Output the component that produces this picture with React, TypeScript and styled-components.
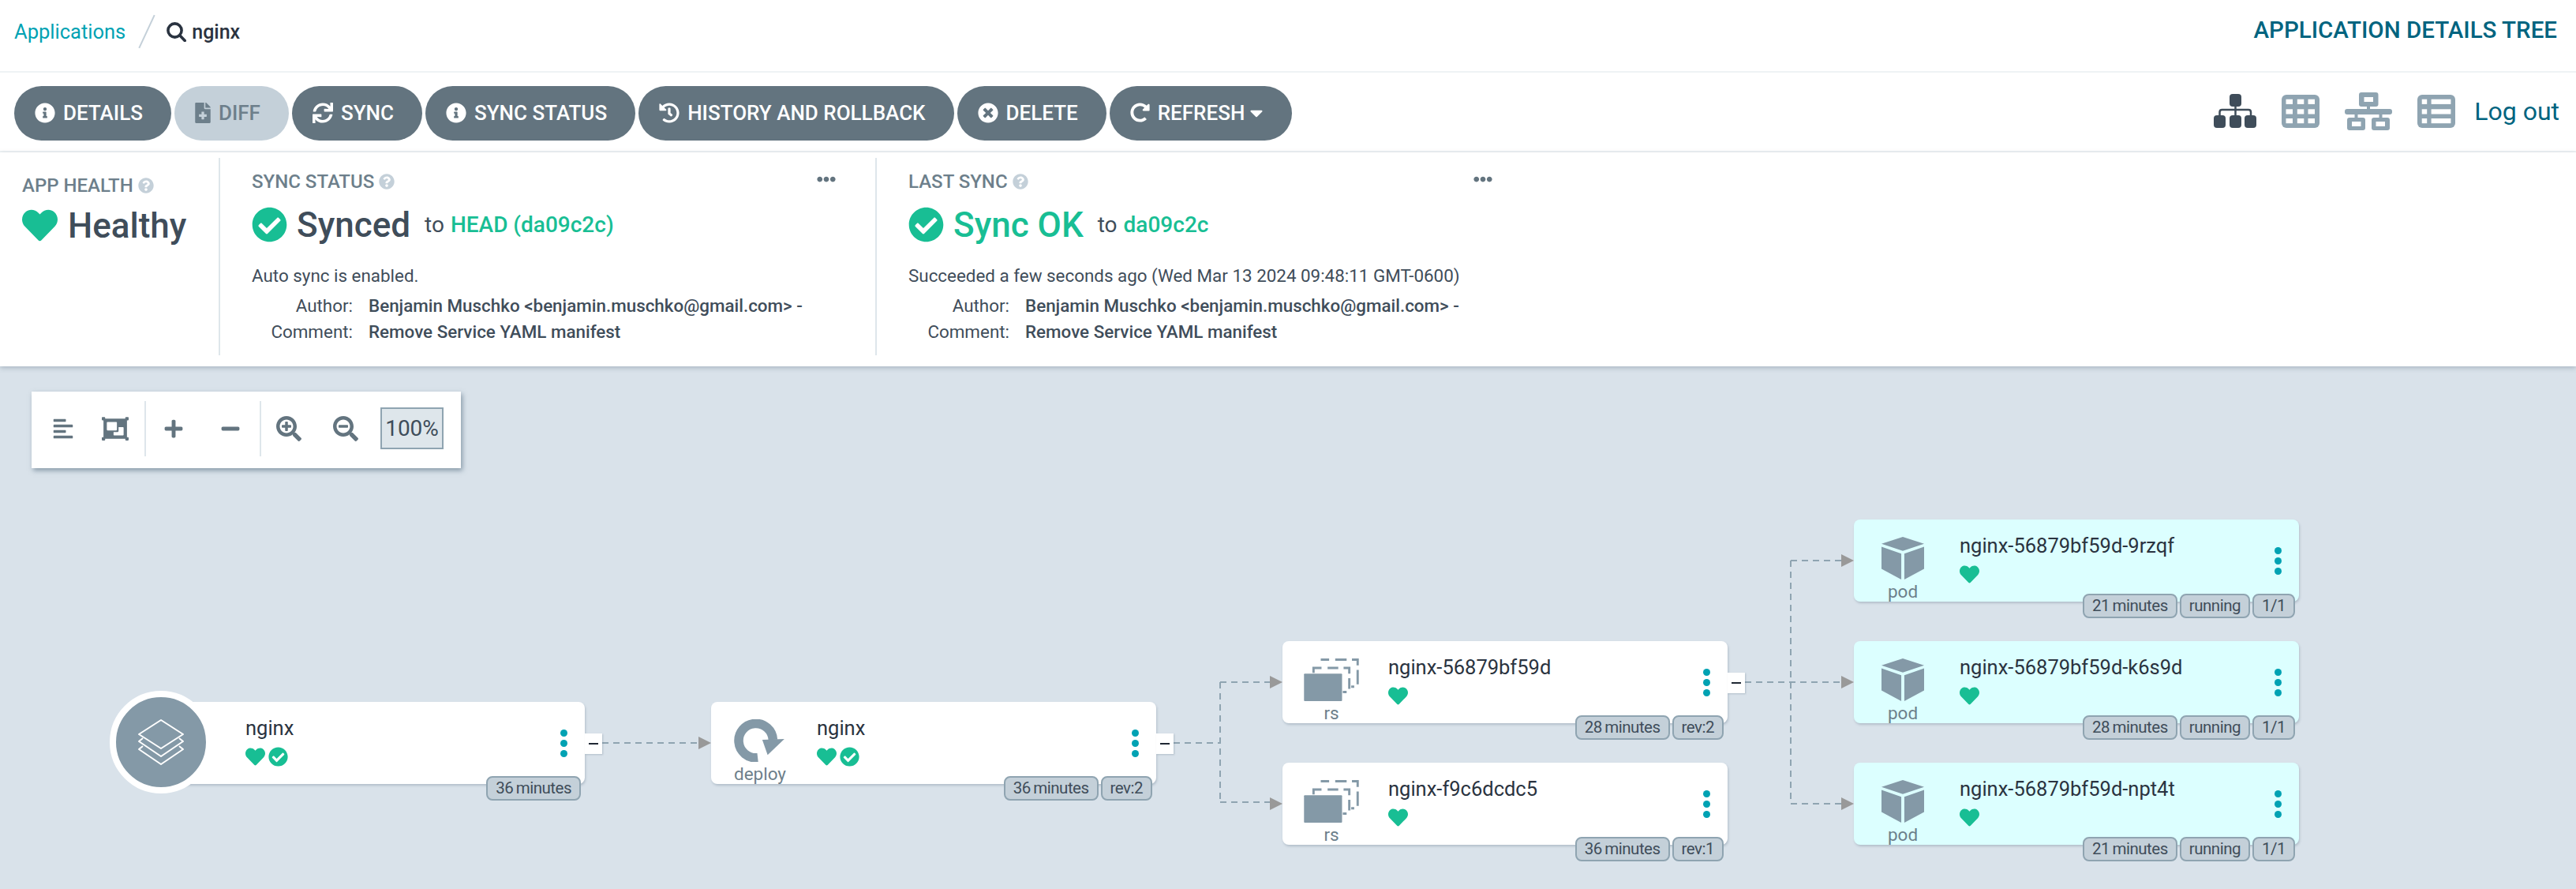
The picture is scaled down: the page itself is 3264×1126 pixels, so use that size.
import React from 'react';
import styled, { createGlobalStyle } from 'styled-components';
import {
  FaInfoCircle, FaFileMedical, FaSync, FaHistory, FaTimesCircle, FaRedoAlt, FaCaretDown,
  FaHeart, FaCheckCircle, FaQuestionCircle,
  FaEllipsisH, FaAlignLeft, FaObjectGroup, FaPlus, FaMinus, FaSearchPlus, FaSearchMinus,
} from 'react-icons/fa';

const GREEN = '#18be94';
const SLATE = '#63747f';
const INK = '#3f4d5a';
const TEAL = '#00647f';
const MUTED = '#8fa4b1';

const Global = createGlobalStyle`
  html, body { margin: 0; padding: 0; height: 100%; overflow: hidden; background: #fff; }
  body { font-family: Roboto, "Liberation Sans", sans-serif; color: ${INK}; }
  * { box-sizing: border-box; }
`;

const Page = styled.div`
  width: 3264px;
  height: 1126px;
  display: flex;
  flex-direction: column;
  overflow: hidden;
`;

const TopBar = styled.header`
  height: 92px;
  flex: none;
  border-bottom: 2px solid #eff3f5;
  display: flex;
  align-items: flex-start;
  justify-content: space-between;
  padding: 23px 24px 0 18px;
`;

const Crumbs = styled.nav`
  display: flex;
  align-items: center;
  height: 34px;
  font-size: 26px;
`;

const CrumbLink = styled.a`
  color: #00a2b3;
  font-weight: 400;
  font-size: 25.5px;
`;

const Slash = styled.span`
  width: 2px;
  height: 46px;
  background: #c4d0d9;
  transform: rotate(25deg);
  margin: 0 24px 0 26px;
`;

const SearchSvg = styled.svg`
  margin-right: 7px;
`;

const CrumbCurrent = styled.span`
  color: #2a3340;
  font-weight: 500;
  font-size: 25px;
`;

const PageTitle = styled.h1`
  margin: -1px 0 0;
  font-size: 29.5px;
  line-height: 32px;
  font-weight: 500;
  color: ${TEAL};
`;

const ToolBar = styled.div`
  height: 101px;
  flex: none;
  border-bottom: 2px solid #eff3f5;
  display: flex;
  align-items: flex-start;
  justify-content: space-between;
  padding: 17px 21px 0 18px;
`;

const ButtonRow = styled.div`
  display: flex;
  gap: 4px;
`;

const ActionButton = styled.button<{ $off?: boolean }>`
  height: 69px;
  border: 0;
  border-radius: 35px;
  padding: 0 36px 2px 26px;
  display: flex;
  align-items: center;
  gap: 10px;
  font: 500 26px Roboto, sans-serif;
  text-transform: uppercase;
  background: ${p => (p.$off ? '#c4d0d9' : '#63747f')};
  color: ${p => (p.$off ? '#6d7f8b' : '#fff')};
`;

const Caret = styled(FaCaretDown)`
  margin: 0 -4px 0 -8px;
`;

const DiffGlyph = styled(FaFileMedical)`
  width: 20px;
  height: 26px;
`;

const ViewRow = styled.div`
  display: flex;
  align-items: center;
  height: 69px;
  margin-top: -3px;
`;

const ViewIcon = styled.svg<{ $gap: number }>`
  display: block;
  margin-right: ${p => p.$gap}px;
`;

const LogOut = styled.a`
  font-size: 32px;
  color: ${TEAL};
`;

const SearchIcon = () => (
  <SearchSvg width="25" height="25" viewBox="0 0 25 25" fill="none" stroke="#2a3340" strokeLinecap="round">
    <circle cx="10.5" cy="10.5" r="8.6" strokeWidth="3.6" />
    <path d="M17 17 23.2 23.4" strokeWidth="3.6" />
  </SearchSvg>
);

const TreeIcon = () => (
  <ViewIcon $gap={32} width="54" height="43" viewBox="0 0 54 43" fill="#3f4d5a">
    <rect x="20" width="15" height="16" rx="4" />
    <rect y="27" width="15" height="16" rx="4" />
    <rect x="20" y="27" width="15" height="16" rx="4" />
    <rect x="39" y="27" width="15" height="16" rx="4" />
    <path d="M7.5 28V23Q7.5 20 10.5 20H44Q47 20 47 23V28M27.5 15V28" fill="none" stroke="#3f4d5a" strokeWidth="2.5" />
  </ViewIcon>
);

const GridIcon = () => (
  <ViewIcon $gap={32} width="48" height="42" viewBox="0 0 48 42">
    <rect width="48" height="42" rx="6" fill={MUTED} />
    {[5.7, 18.3, 30].flatMap(y =>
      [5.5, 19.8, 33.5].map(x => <rect key={`${x}-${y}`} x={x} y={y} width="8.5" height="6.2" fill="#fff" />),
    )}
  </ViewIcon>
);

const NetworkIcon = () => (
  <ViewIcon $gap={32} width="60" height="48" viewBox="0 0 60 48" fill={MUTED}>
    <path fillRule="evenodd" d="M21 0H39.5Q42.5 0 42.5 3V15Q42.5 18 39.5 18H21Q18 18 18 15V3Q18 0 21 0ZM24.5 6V12H36V6Z" />
    <rect y="21" width="60" height="7" rx="3" />
    <rect x="28" y="17" width="4" height="5" />
    <rect x="12.5" y="27" width="4" height="6" />
    <rect x="43.5" y="27" width="4" height="6" />
    <path fillRule="evenodd" d="M6 32H23Q26 32 26 35V45Q26 48 23 48H6Q3 48 3 45V35Q3 32 6 32ZM9 37V43H20.5V37Z" />
    <path fillRule="evenodd" d="M37 32H54Q57 32 57 35V45Q57 48 54 48H37Q34 48 34 45V35Q34 32 37 32ZM39.5 37V43H51V37Z" />
  </ViewIcon>
);

const ListIcon = () => (
  <ViewIcon $gap={24} width="48" height="42" viewBox="0 0 48 42">
    <rect width="48" height="42" rx="6" fill={MUTED} />
    {[5.7, 18.3, 30].map(y => (
      <React.Fragment key={y}>
        <rect x="5.7" y={y} width="6.5" height="6.2" fill="#fff" />
        <rect x="17.6" y={y} width="24.8" height="6.2" fill="#fff" />
      </React.Fragment>
    ))}
  </ViewIcon>
);

const InfoBar = styled.section`
  height: 271px;
  flex: none;
  background: #fff;
  display: flex;
  padding: 7px 0 14px;
  box-shadow: 0 2px 6px rgba(80, 100, 120, 0.35);
  position: relative;
  z-index: 1;
`;

const HealthPanel = styled.div`
  width: 279px;
  flex: none;
  border-right: 2px solid #dee6eb;
  padding: 22px 0 0 28px;
`;

const SyncPanel = styled.div<{ $w: number }>`
  width: ${p => p.$w}px;
  flex: none;
  padding: 17px 0 0 40px;
  position: relative;
  border-right: ${p => (p.$w === 832 ? '2px solid #dee6eb' : '0')};
`;

const PanelLabel = styled.div`
  display: flex;
  align-items: center;
  gap: 6px;
  height: 26px;
  font-size: 24px;
  font-weight: 500;
  color: #6d7f8b;
`;

const Help = styled(FaQuestionCircle)`
  color: #c4d0d9;
`;

const More = styled(FaEllipsisH)<{ $right: number }>`
  position: absolute;
  top: 15px;
  right: ${p => p.$right}px;
  color: ${SLATE};
`;

const StatusRow = styled.div`
  display: flex;
  align-items: center;
  gap: 12px;
  margin-top: 19px;
  height: 45px;
`;

const HealthRow = styled(StatusRow)`
  margin-top: 15px;
  gap: 13px;
`;

const BigStatus = styled.span<{ $ok?: boolean }>`
  font-size: 44px;
  font-weight: 500;
  color: ${p => (p.$ok ? GREEN : INK)};
`;

const ToRef = styled.span`
  font-size: 28px;
  margin-left: 6px;
  color: ${INK};
`;

const RefLink = styled.a`
  color: ${GREEN};
  font-weight: 500;
  margin-left: 8px;
`;

const Note = styled.div`
  margin-top: 26px;
  font-size: 22.4px;
  line-height: 32px;
  color: ${INK};
`;

const Meta = styled.div`
  margin-top: 6px;
  display: grid;
  grid-template-columns: 128px 1fr;
  column-gap: 20px;
  font-size: 22.4px;
  line-height: 33px;
`;

const MetaKey = styled.span`
  text-align: right;
`;

const MetaValue = styled.span`
  font-weight: 500;
`;

const Canvas = styled.main`
  flex: 1;
  position: relative;
  background: #d9e2ea;
  overflow: hidden;
`;

const Graph = styled.svg`
  position: absolute;
  left: 0;
  top: 0;
`;

const ZoomBar = styled.div`
  position: absolute;
  left: 40px;
  top: 32px;
  width: 544px;
  height: 97px;
  padding-bottom: 4px;
  background: #fff;
  box-shadow: 2px 3px 6px rgba(70, 95, 115, 0.55);
  display: flex;
  align-items: center;
  color: ${SLATE};
`;

const ZoomIcon = styled.span<{ $w: number }>`
  width: ${p => p.$w}px;
  height: 60px;
  display: flex;
  align-items: center;
  justify-content: center;
`;

const ZoomSep = styled.span<{ $lead?: number }>`
  width: 2px;
  height: 70px;
  margin-left: ${p => p.$lead ?? 0}px;
  background: #dee6eb;
`;

const ZoomValue = styled.span`
  width: 80px;
  height: 53px;
  margin-left: 7px;
  border: 2px solid ${MUTED};
  background: #dee6eb;
  display: flex;
  align-items: center;
  justify-content: center;
  font-size: 28px;
  font-weight: 400;
  color: ${INK};
`;

const Card = styled.article<{ $x: number; $y: number; $pod?: boolean }>`
  position: absolute;
  left: ${p => p.$x}px;
  top: ${p => p.$y}px;
  width: 564px;
  height: 104px;
  border-radius: 8px;
  background: ${p => (p.$pod ? '#dcffff' : '#fff')};
  box-shadow: 1px 2px 3px rgba(90, 110, 130, 0.3);
  display: flex;
`;

const KindColumn = styled.div`
  width: 124px;
  margin-right: 10px;
  flex: none;
  padding-top: 22px;
  display: flex;
  flex-direction: column;
  align-items: center;
`;

const KindLabel = styled.span`
  margin-top: 2px;
  font-size: 22.5px;
  line-height: 26px;
  color: #6d7f8b;
`;

const NodeBody = styled.div`
  flex: 1;
  padding-top: 17px;
`;

const NodeName = styled.div`
  font-size: 25.5px;
  line-height: 32px;
  color: #2a3340;
`;

const NodeStatus = styled.div`
  display: flex;
  align-items: center;
  gap: 4px;
  margin-top: 7px;
  height: 26px;
  color: ${GREEN};
`;

const Dots = styled.div`
  width: 54px;
  flex: none;
  display: flex;
  flex-direction: column;
  align-items: center;
  justify-content: center;
  gap: 4px;
`;

const Dot = styled.i`
  width: 9px;
  height: 9px;
  border-radius: 50%;
  background: #00a2b3;
`;

const Collapse = styled.span`
  position: absolute;
  left: 100%;
  top: 40px;
  width: 22px;
  height: 26px;
  background: #fff;
  box-shadow: 1px 1px 2px rgba(90, 110, 130, 0.3);
  display: flex;
  align-items: center;
  justify-content: center;
  &::before {
    content: '';
    width: 12px;
    height: 2px;
    background: #1f2733;
  }
`;

const TagRow = styled.div`
  position: absolute;
  right: 5px;
  top: 94px;
  display: flex;
  gap: 3px;
`;

const Tag = styled.span`
  height: 31px;
  padding: 0 10px;
  border: 2px solid ${MUTED};
  border-radius: 8px;
  background: #c4d0d9;
  font-size: 20.5px;
  letter-spacing: -0.5px;
  word-spacing: -1px;
  line-height: 27px;
  color: ${INK};
`;

const AppBadge = styled.div`
  position: absolute;
  left: -38px;
  top: -14px;
  width: 130px;
  height: 130px;
  border-radius: 50%;
  background: #8499a7;
  border: 8px solid #fff;
  display: flex;
  align-items: center;
  justify-content: center;
`;

const LayersIcon = () => (
  <svg width="60" height="60" viewBox="-2 -2 60 60" fill="none" stroke="#fff" strokeWidth="2" strokeLinejoin="round">
    <path d="M28 0 56 18 28 36 0 18Z" />
    <path d="M5 23 0 27 28 46 56 27 51 23" />
    <path d="M5 33 0 37 28 56 56 37 51 33" />
  </svg>
);

const DeployIcon = () => (
  <svg width="66" height="56" viewBox="0 0 66 56">
    <path d="M30 50.5A22.5 22.5 0 1 1 50 27" fill="none" stroke="#8499a7" strokeWidth="12" />
    <path d="M36 27 65 26 43 47Z" fill="#8499a7" />
  </svg>
);

const RsIcon = () => (
  <svg width="72" height="56" viewBox="0 0 72 56" fill="none" stroke="#8499a7" strokeWidth="3">
    <path d="M22 1.5H33M41 1.5H56M63 1.5H70.5V9M70.5 15V34M62 37H66" />
    <path d="M12.5 19V12.5H23M31 12.5H45M52 12.5H59.5V20M59.5 26V40M51 44H56" />
    <rect x="0" y="20" width="50" height="36" fill="#8499a7" stroke="none" rx="1" />
  </svg>
);

const PodIcon = () => (
  <svg width="56" height="56" viewBox="0 0 56 56" fill="#8499a7">
    <path d="M28 0 56 9 28 18.5 0 9Z" />
    <path d="M0 13 26 22V56L0 42Z" />
    <path d="M56 13 30 22V56L56 42Z" />
  </svg>
);

type NodeData = {
  x: number;
  y: number;
  name: string;
  kind?: 'deploy' | 'rs' | 'pod';
  tags: string[];
  synced?: boolean;
  expandable?: boolean;
};

const NODES: NodeData[] = [
  { x: 177, y: 425, name: 'nginx', tags: ['36 minutes'], synced: true, expandable: true },
  { x: 901, y: 425, name: 'nginx', kind: 'deploy', tags: ['36 minutes', 'rev:2'], synced: true, expandable: true },
  { x: 1625, y: 348, name: 'nginx-56879bf59d', kind: 'rs', tags: ['28 minutes', 'rev:2'], expandable: true },
  { x: 1625, y: 502, name: 'nginx-f9c6dcdc5', kind: 'rs', tags: ['36 minutes', 'rev:1'] },
  { x: 2349, y: 194, name: 'nginx-56879bf59d-9rzqf', kind: 'pod', tags: ['21 minutes', 'running', '1/1'] },
  { x: 2349, y: 348, name: 'nginx-56879bf59d-k6s9d', kind: 'pod', tags: ['28 minutes', 'running', '1/1'] },
  { x: 2349, y: 502, name: 'nginx-56879bf59d-npt4t', kind: 'pod', tags: ['21 minutes', 'running', '1/1'] },
];

const KIND_ICON = { deploy: <DeployIcon />, rs: <RsIcon />, pod: <PodIcon /> };

const ResourceNode = ({ node }: { node: NodeData }) => (
  <Card $x={node.x} $y={node.y} $pod={node.kind === 'pod'}>
    {!node.kind && (
      <AppBadge>
        <LayersIcon />
      </AppBadge>
    )}
    <KindColumn>
      {node.kind && KIND_ICON[node.kind]}
      {node.kind && <KindLabel>{node.kind}</KindLabel>}
    </KindColumn>
    <NodeBody>
      <NodeName>{node.name}</NodeName>
      <NodeStatus>
        <FaHeart size={25} />
        {node.synced && <FaCheckCircle size={25} />}
      </NodeStatus>
    </NodeBody>
    <Dots>
      <Dot />
      <Dot />
      <Dot />
    </Dots>
    {node.expandable && <Collapse />}
    <TagRow>
      {node.tags.map(t => (
        <Tag key={t}>{t}</Tag>
      ))}
    </TagRow>
  </Card>
);

const EDGES = [
  'M763 477H890',
  'M1487 477H1546M1546 400V552M1546 400H1614M1546 552H1614',
  'M2211 400H2338M2269 246V554M2269 246H2338M2269 554H2338',
];

const ARROWS: [number, number][] = [
  [901, 477],
  [1625, 400],
  [1625, 554],
  [2349, 246],
  [2349, 400],
  [2349, 554],
];

const BUTTONS = [
  { label: 'Details', icon: <FaInfoCircle size={26} /> },
  { label: 'Diff', icon: <DiffGlyph />, off: true },
  { label: 'Sync', icon: <FaSync size={26} /> },
  { label: 'Sync Status', icon: <FaInfoCircle size={26} /> },
  { label: 'History and rollback', icon: <FaHistory size={26} /> },
  { label: 'Delete', icon: <FaTimesCircle size={26} /> },
  { label: 'Refresh', icon: <FaRedoAlt size={25} />, caret: true },
];

const SyncDetails = () => (
  <Meta>
    <MetaKey>Author:</MetaKey>
    <MetaValue>Benjamin Muschko &lt;benjamin.muschko@gmail.com&gt; -</MetaValue>
    <MetaKey>Comment:</MetaKey>
    <MetaValue>Remove Service YAML manifest</MetaValue>
  </Meta>
);

export default function App() {
  return (
    <Page>
      <Global />
      <TopBar>
        <Crumbs>
          <CrumbLink>Applications</CrumbLink>
          <Slash />
          <SearchIcon />
          <CrumbCurrent>nginx</CrumbCurrent>
        </Crumbs>
        <PageTitle>APPLICATION DETAILS TREE</PageTitle>
      </TopBar>
      <ToolBar>
        <ButtonRow>
          {BUTTONS.map(b => (
            <ActionButton key={b.label} $off={b.off}>
              {b.icon}
              <span>{b.label}</span>
              {b.caret && <Caret size={26} />}
            </ActionButton>
          ))}
        </ButtonRow>
        <ViewRow>
          <TreeIcon />
          <GridIcon />
          <NetworkIcon />
          <ListIcon />
          <LogOut>Log out</LogOut>
        </ViewRow>
      </ToolBar>
      <InfoBar>
        <HealthPanel>
          <PanelLabel>APP HEALTH <Help size={20} /></PanelLabel>
          <HealthRow>
            <FaHeart size={45} color={GREEN} />
            <BigStatus>Healthy</BigStatus>
          </HealthRow>
        </HealthPanel>
        <SyncPanel $w={832}>
          <PanelLabel>SYNC STATUS <Help size={20} /></PanelLabel>
          <More $right={50} size={24} />
          <StatusRow>
            <FaCheckCircle size={45} color={GREEN} />
            <BigStatus>Synced</BigStatus>
            <ToRef>to<RefLink>HEAD (da09c2c)</RefLink></ToRef>
          </StatusRow>
          <Note>Auto sync is enabled.</Note>
          <SyncDetails />
        </SyncPanel>
        <SyncPanel $w={830}>
          <PanelLabel>LAST SYNC <Help size={20} /></PanelLabel>
          <More $right={50} size={24} />
          <StatusRow>
            <FaCheckCircle size={45} color={GREEN} />
            <BigStatus $ok>Sync OK</BigStatus>
            <ToRef>to<RefLink>da09c2c</RefLink></ToRef>
          </StatusRow>
          <Note>Succeeded a few seconds ago (Wed Mar 13 2024 09:48:11 GMT-0600)</Note>
          <SyncDetails />
        </SyncPanel>
      </InfoBar>
      <Canvas>
        <Graph width="3264" height="662" fill="none">
          {EDGES.map(d => (
            <path key={d} d={d} stroke={MUTED} strokeWidth="2" strokeDasharray="8 6" />
          ))}
          {ARROWS.map(([x, y]) => (
            <path key={`${x}-${y}`} d={`M${x} ${y}L${x - 16} ${y - 8}V${y + 8}Z`} fill="#999" />
          ))}
        </Graph>
        <ZoomBar>
          <ZoomIcon $w={80}><FaAlignLeft size={28} /></ZoomIcon>
          <ZoomIcon $w={52}><FaObjectGroup size={34} /></ZoomIcon>
          <ZoomSep $lead={11} />
          <ZoomIcon $w={70}><FaPlus size={26} /></ZoomIcon>
          <ZoomIcon $w={74}><FaMinus size={26} /></ZoomIcon>
          <ZoomSep />
          <ZoomIcon $w={70}><FaSearchPlus size={32} /></ZoomIcon>
          <ZoomIcon $w={74}><FaSearchMinus size={32} /></ZoomIcon>
          <ZoomValue>100%</ZoomValue>
        </ZoomBar>
        {NODES.map(n => (
          <ResourceNode key={n.name + n.x} node={n} />
        ))}
      </Canvas>
    </Page>
  );
}
